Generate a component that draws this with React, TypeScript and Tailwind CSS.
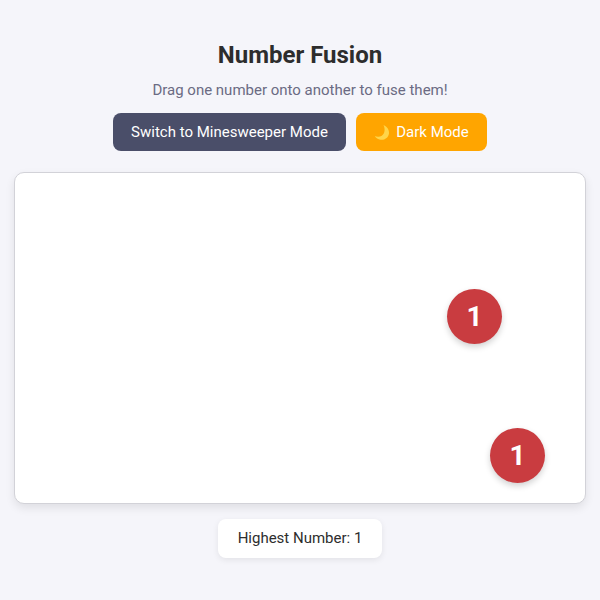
export default function App() {
  const tiles = [
    { left: 432, top: 116 },
    { left: 475, top: 255 },
  ];

  return (
    <div className="min-h-[600px] bg-[#f5f5fa] flex flex-col items-center px-[14px] pt-[41px] font-['Roboto',sans-serif]">
      <h1 className="text-[24px] leading-[28px] font-bold text-[#2d2d2d]">Number Fusion</h1>
      <p className="mt-[12px] text-[15px] leading-[19px] text-[#6b6b83]">
        Drag one number onto another to fuse them!
      </p>

      <div className="mt-[13px] flex gap-[10px]">
        <button className="h-[38px] w-[233px] rounded-lg bg-[#4a4e69] text-[15px] text-white">
          Switch to Minesweeper Mode
        </button>
        <button className="h-[38px] w-[131px] rounded-lg bg-[#ffa500] text-[15px] text-white flex items-center justify-center gap-[6px]">
          <svg width="16" height="17" viewBox="0 0 16 16">
            <path d="M9.5 0.5 C13.2 2 15.4 5.5 15 9 C14.5 13 10.8 15.8 6.5 15.3 C4 15 2 13.6 0.8 11.6 C3 12.6 5.8 12.6 7.8 11.2 C10.9 9 11.4 4.4 9.5 0.5 Z" fill="#ffd54a" />
          </svg>
          <span>Dark Mode</span>
        </button>
      </div>

      <div className="relative mt-[21px] h-[332px] w-[572px] rounded-[10px] border border-[#d2d2d8] bg-white shadow-[0_4px_10px_rgba(0,0,0,0.09)]">
        {tiles.map((t, i) => (
          <div
            key={i}
            className="absolute flex h-[55px] w-[55px] items-center justify-center rounded-full bg-[#c93c40] text-[28px] font-bold text-white shadow-[0_3px_6px_rgba(0,0,0,0.18)]"
            style={{ left: t.left, top: t.top }}
          >
            1
          </div>
        ))}
      </div>

      <div className="mt-[15px] flex h-[39px] w-[164px] items-center justify-center rounded-lg bg-white text-[15px] text-[#2d2d2d] shadow-[0_2px_6px_rgba(0,0,0,0.08)]">
        Highest Number: 1
      </div>
    </div>
  );
}
